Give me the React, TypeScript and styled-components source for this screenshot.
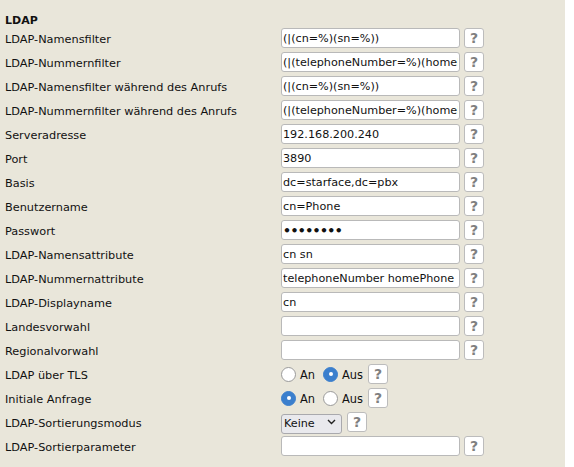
import React from "react";
import styled, { createGlobalStyle } from "styled-components";

const GlobalStyle = createGlobalStyle`
  html, body {
    margin: 0;
    padding: 0;
    background: #ffffff;
  }
  body {
    font-family: "DejaVu Sans", Verdana, sans-serif;
    color: #111;
  }
`;

const Page = styled.main`
  width: 565px;
  min-height: 467px;
  background: #e9e6da;
  padding: 15px 0 0 5px;
  box-sizing: border-box;
`;

const Title = styled.h2`
  margin: 0;
  font-size: 11px;
  font-weight: bold;
  line-height: 11px;
`;

const Form = styled.div`
  display: grid;
  grid-template-columns: 276px auto;
  grid-auto-rows: 24px;
  align-items: center;
`;

const Label = styled.label`
  font-size: 11.3px;
  padding-top: 2px;
  white-space: nowrap;
`;

const Cell = styled.div`
  display: flex;
  align-items: center;
  gap: 4px;
`;

const TextInput = styled.input<{ $secret?: boolean }>`
  width: 179px;
  height: 20px;
  box-sizing: border-box;
  margin: 0;
  padding: 0 1px;
  border: 1px solid #b9b9b9;
  border-radius: 3px;
  background: #fff;
  font-family: "DejaVu Sans", Verdana, sans-serif;
  font-size: ${({ $secret }) => ($secret ? "12.5px" : "11.2px")};
  font-weight: ${({ $secret }) => ($secret ? "bold" : "normal")};
  letter-spacing: ${({ $secret }) => ($secret ? "-0.6px" : "normal")};
  color: #111;
  outline: none;
`;

const HelpButton = styled.button<{ $ml?: number }>`
  width: 20px;
  height: 20px;
  box-sizing: border-box;
  margin: 0 0 0 ${({ $ml }) => $ml ?? 0}px;
  padding: 0;
  border: 1px solid #bcbcbc;
  border-radius: 3px;
  background: #fff;
  color: #808080;
  font-family: "DejaVu Sans", Verdana, sans-serif;
  font-weight: bold;
  font-size: 14px;
  line-height: 18px;
  text-align: center;
  cursor: pointer;
`;

const RadioGroup = styled.div`
  display: flex;
  align-items: center;
`;

const Radio = styled.input`
  appearance: none;
  width: 15px;
  height: 15px;
  margin: 0 4px 0 0;
  border-radius: 50%;
  border: 1px solid #9a9a9a;
  background: #fff;
  box-sizing: border-box;
  display: grid;
  place-content: center;

  &:checked {
    border-color: #3b7fcd;
    background: #3b7fcd;
  }
  &:checked::after {
    content: "";
    width: 4px;
    height: 4px;
    border-radius: 50%;
    background: #fff;
  }
`;

const RadioText = styled.span<{ $mr?: number }>`
  font-size: 11.4px;
  padding-top: 1px;
  margin-right: ${({ $mr }) => $mr ?? 0}px;
`;

const SelectWrap = styled.div`
  position: relative;
  width: 61px;
  height: 20px;
`;

const Select = styled.select`
  appearance: none;
  width: 100%;
  height: 100%;
  margin: 0;
  padding: 0 0 0 2px;
  box-sizing: border-box;
  border: 1px solid #a9a9ad;
  border-radius: 3px;
  background: #e9e9ed;
  font-family: "DejaVu Sans", Verdana, sans-serif;
  font-size: 11.2px;
  color: #111;
  outline: none;
`;

const Chevron = styled.svg`
  position: absolute;
  right: 6px;
  top: 7px;
  pointer-events: none;
`;

type Row = { label: string; value: string; secret?: boolean };

const textRows: Row[] = [
  { label: "LDAP-Namensfilter", value: "(|(cn=%)(sn=%))" },
  { label: "LDAP-Nummernfilter", value: "(|(telephoneNumber=%)(homePhone=%)(mobile=%))" },
  { label: "LDAP-Namensfilter während des Anrufs", value: "(|(cn=%)(sn=%))" },
  { label: "LDAP-Nummernfilter während des Anrufs", value: "(|(telephoneNumber=%)(homePhone=%)(mobile=%))" },
  { label: "Serveradresse", value: "192.168.200.240" },
  { label: "Port", value: "3890" },
  { label: "Basis", value: "dc=starface,dc=pbx" },
  { label: "Benutzername", value: "cn=Phone" },
  { label: "Passwort", value: "geheim12", secret: true },
  { label: "LDAP-Namensattribute", value: "cn sn" },
  { label: "LDAP-Nummernattribute", value: "telephoneNumber homePhone" },
  { label: "LDAP-Displayname", value: "cn" },
  { label: "Landesvorwahl", value: "" },
  { label: "Regionalvorwahl", value: "" },
];

function OnOff({ name, on }: { name: string; on: boolean }) {
  return (
    <RadioGroup>
      <Radio type="radio" name={name} defaultChecked={on} />
      <RadioText $mr={8}>An</RadioText>
      <Radio type="radio" name={name} defaultChecked={!on} />
      <RadioText>Aus</RadioText>
      <HelpButton type="button" $ml={5}>?</HelpButton>
    </RadioGroup>
  );
}

export default function App() {
  return (
    <>
      <GlobalStyle />
      <Page>
        <Title>LDAP</Title>
        <Form>
          {textRows.map((r) => (
            <React.Fragment key={r.label}>
              <Label>{r.label}</Label>
              <Cell>
                <TextInput
                  type={r.secret ? "password" : "text"}
                  $secret={r.secret}
                  defaultValue={r.value}
                />
                <HelpButton type="button">?</HelpButton>
              </Cell>
            </React.Fragment>
          ))}

          <Label>LDAP über TLS</Label>
          <OnOff name="tls" on={false} />

          <Label>Initiale Anfrage</Label>
          <OnOff name="initial" on={true} />

          <Label>LDAP-Sortierungsmodus</Label>
          <Cell>
            <SelectWrap>
              <Select defaultValue="none">
                <option value="none">Keine</option>
                <option value="name">Name</option>
                <option value="number">Nummer</option>
              </Select>
              <Chevron width="9" height="6" viewBox="0 0 9 6">
                <path d="M1 1l3.5 3.5L8 1" fill="none" stroke="#222" strokeWidth="1.4" />
              </Chevron>
            </SelectWrap>
            <HelpButton type="button" $ml={1}>?</HelpButton>
          </Cell>

          <Label>LDAP-Sortierparameter</Label>
          <Cell>
            <TextInput type="text" defaultValue="" />
            <HelpButton type="button">?</HelpButton>
          </Cell>
        </Form>
      </Page>
    </>
  );
}
